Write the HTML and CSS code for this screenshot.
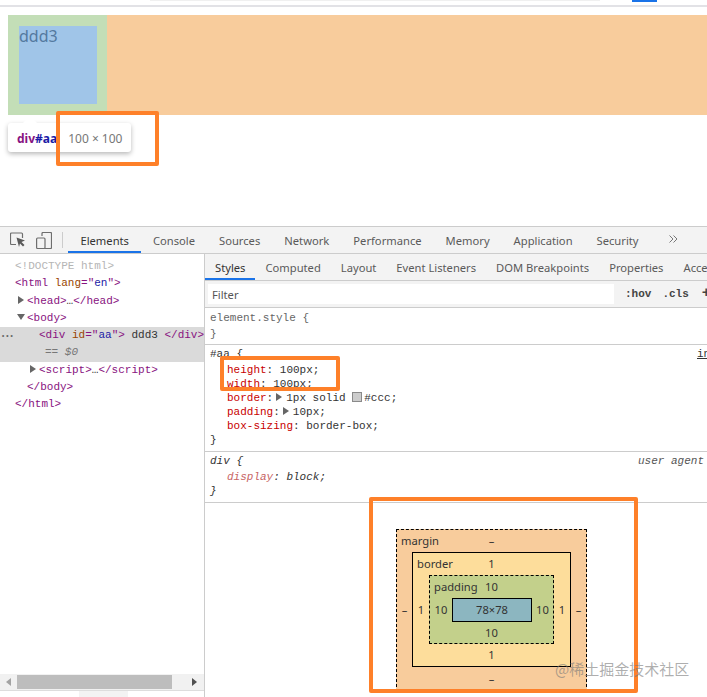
FILE: index.html
```html
<!DOCTYPE html>
<html lang="en">

<head>
<meta charset="UTF-8" />
<title>box model</title>
<link rel="stylesheet" href="styles.css">
</head>

<body>
<div class="topbar"><span class="top-field"></span><span class="top-blue"></span></div>

<div class="preview">
<div class="bar">
<div class="padbox"><div class="inner">ddd3</div></div>
</div>
<div class="tooltip"><b class="tip-tag">div</b><b class="tip-id">#aa</b><span class="tip-size">100 × 100</span></div>
</div>

<div class="devtools">
<div class="toolbar">
<svg class="tool-icon" width="16" height="16" viewBox="0 0 16 16">
<path d="M6 12.500H1.500a1 1 0 0 1-1-1V2a1 1 0 0 1 1-1h10a1 1 0 0 1 1 1v4" fill="none" stroke="#6e6e6e" stroke-width="1.200"/>
<path d="M6.500 5.500l8.500 3-3.500 1.500 3 3-1.500 1.500-3-3L9 15z" fill="#5a5a5a"/>
</svg>
<svg class="tool-icon" width="16" height="17" viewBox="0 0 16 17">
<path d="M6 4V1.500a1 1 0 0 1 1-1h7.500a1 1 0 0 1 1 1v14a1 1 0 0 1-1 1H9" fill="none" stroke="#6e6e6e" stroke-width="1.200"/>
<rect x="0.600" y="6" width="8.400" height="10.500" rx="1" fill="none" stroke="#6e6e6e" stroke-width="1.200"/>
</svg>
<span class="tool-sep"></span>
<div class="tabs">
<span class="tab active">Elements</span>
<span class="tab">Console</span>
<span class="tab">Sources</span>
<span class="tab">Network</span>
<span class="tab">Performance</span>
<span class="tab">Memory</span>
<span class="tab">Application</span>
<span class="tab">Security</span>
</div>
<svg class="more" width="9" height="8" viewBox="0 0 9 8">
<path d="M.5.500L4 4 .5 7.500M4.500.500L8 4 4.500 7.500" fill="none" stroke="#777" stroke-width="1"/>
</svg>
<span class="end-sep"></span>
</div>

<div class="panes">
<div class="dom">
<div class="dom-tree">
<div class="line lv0 doctype">&lt;!DOCTYPE html&gt;</div>
<div class="line lv0"><i>&lt;html</i> <u>lang</u><i>="</i><em>en</em><i>"&gt;</i></div>
<div class="line lv1"><span class="arrow right"></span><i>&lt;head&gt;</i>…<i>&lt;/head&gt;</i></div>
<div class="line lv1"><span class="arrow down"></span><i>&lt;body&gt;</i></div>
<div class="selected">
<span class="dots">•••</span>
<div class="line lv2"><i>&lt;div</i> <u>id</u><i>="</i><em>aa</em><i>"&gt;</i> ddd3 <i>&lt;/div&gt;</i></div>
<div class="line lv3">== $0</div>
</div>
<div class="line lv2"><span class="arrow right"></span><i>&lt;script&gt;</i>…<i>&lt;/script&gt;</i></div>
<div class="line lv1"><i>&lt;/body&gt;</i></div>
<div class="line lv0"><i>&lt;/html&gt;</i></div>
</div>
<div class="scrollbar">
<span class="sb-arrow left"></span>
<span class="sb-thumb"></span>
<span class="sb-arrow rightward"></span>
</div>
<span class="below-bar"></span>
</div>

<div class="side">
<div class="subtabs">
<span class="subtab active">Styles</span>
<span class="subtab">Computed</span>
<span class="subtab">Layout</span>
<span class="subtab">Event Listeners</span>
<span class="subtab">DOM Breakpoints</span>
<span class="subtab">Properties</span>
<span class="subtab">Acces</span>
</div>
<div class="filter">
<div class="filter-input">Filter</div>
<div class="filter-btns"><b>:hov</b><b>.cls</b><b class="plus">+</b></div>
</div>

<div class="rule rule-el">
<div class="sel head">element.style {</div>
<div class="sel">}</div>
</div>

<div class="rule rule-aa">
<a class="source">in</a>
<div class="sel dark head">#aa {</div>
<div class="decl"><span class="prop">height</span>: 100px;</div>
<div class="decl"><span class="prop">width</span>: 100px;</div>
<div class="decl"><span class="prop">border</span>:<span class="tri"></span>1px solid <span class="swatch"></span>#ccc;</div>
<div class="decl"><span class="prop">padding</span>:<span class="tri"></span>10px;</div>
<div class="decl"><span class="prop">box-sizing</span>: border-box;</div>
<div class="sel dark">}</div>
</div>

<div class="rule rule-div">
<span class="source agent">user agent</span>
<div class="sel dark ua head">div {</div>
<div class="decl ua"><span class="prop">display</span>: block;</div>
<div class="sel dark ua">}</div>
</div>

<div class="metrics">
<div class="mbox m-margin">
<div class="mtop"><span>margin</span><span>–</span></div>
<span class="mside">–</span>
<div class="mbox m-border">
<div class="mtop"><span>border</span><span>1</span></div>
<span class="mside">1</span>
<div class="mbox m-padding">
<div class="mtop"><span>padding</span><span>10</span></div>
<span class="mside">10</span>
<div class="m-content">78×78</div>
<span class="mside">10</span>
<div class="mbottom">10</div>
</div>
<span class="mside">1</span>
<div class="mbottom">1</div>
</div>
<span class="mside">–</span>
<div class="mbottom">–</div>
</div>
</div>
</div>
</div>
</div>

<div class="mark mark-size"></div>
<div class="mark mark-rule"></div>
<div class="mark mark-box"></div>
<div class="watermark">@稀土掘金技术社区</div>
</body>

</html>
```

FILE: styles.css
```css
* {
margin: 0;
padding: 0;
box-sizing: border-box;
}

html, body {
height: 697px;
overflow: hidden;
background: #fff;
}

body {
position: relative;
font-family: "Noto Sans", sans-serif;
font-size: 11.200px;
color: #5a5a5a;
}

.topbar {
height: 7px;
border-bottom: 2px solid #e2e2e6;
display: flex;
justify-content: space-between;
padding: 0 50px 0 150px;
}

.top-field {
width: 450px;
height: 1px;
background: #f0f0f0;
}

.top-blue {
width: 25px;
height: 2px;
background: #1a73e8;
}

/* page being inspected */
.preview {
height: 219px;
padding-top: 8px;
position: relative;
}

.bar {
height: 100px;
margin-left: 8px;
background: #f8cc9c;
}

.padbox {
width: 99px;
height: 100px;
padding: 11px;
background: #c3deb7;
}

.inner {
width: 78px;
height: 78px;
background: #a0c5e8;
color: #53799f;
font-size: 16px;
line-height: 21px;
}

.tooltip {
position: absolute;
left: 8px;
top: 116px;
width: 123px;
height: 29px;
padding: 1px 0 0 9px;
display: flex;
align-items: center;
background: #fff;
border-radius: 3px;
box-shadow: 0 2px 5px rgba(0, 0, 0, 0.28);
font-size: 12px;
}

.tooltip::before {
content: "";
position: absolute;
left: 17px;
top: -5px;
width: 10px;
height: 10px;
background: #fff;
transform: rotate(45deg);
}

.tip-tag, .tip-id, .tip-size {
position: relative;
}

.tip-tag {
color: #881280;
}

.tip-id {
color: #1a1aa6;
}

.tip-size {
margin-left: 11px;
color: #777;
}

/* devtools */
.devtools {
height: 471px;
border-top: 1px solid #ccc;
}

.toolbar {
height: 27px;
background: #f3f3f3;
border-bottom: 1px solid #ccc;
display: flex;
align-items: center;
padding-left: 10px;
}

.tool-icon {
flex: none;
}

.tool-icon + .tool-icon {
margin-left: 10px;
}

.tool-sep {
width: 1px;
height: 16px;
margin: 0 6px 0 10px;
background: #ccc;
}

.tabs {
display: flex;
height: 26px;
}

.tab {
padding: 0 12px;
line-height: 27px;
white-space: nowrap;
}

.tab.active {
color: #333;
border-bottom: 2px solid #1a73e8;
}

.more {
flex: none;
margin-left: 18px;
margin-bottom: 3px;
}

.end-sep {
width: 1px;
height: 16px;
margin-left: 29px;
background: #ccc;
}

.panes {
display: flex;
height: 443px;
}

.dom {
width: 205px;
flex: none;
border-right: 1px solid #ccc;
display: flex;
flex-direction: column;
font-family: "Liberation Mono", monospace;
font-size: 11px;
color: #333;
}

.dom-tree {
flex: 1;
padding-top: 4px;
}

.line {
height: 17.250px;
line-height: 17px;
white-space: nowrap;
position: relative;
}

.line i {
font-style: normal;
color: #881280;
}

.line u {
text-decoration: none;
color: #994500;
}

.line em {
font-style: normal;
color: #1a1aa6;
}

.lv0 {
padding-left: 15px;
}

.lv1 {
padding-left: 27px;
}

.lv2 {
padding-left: 39px;
}

.lv3 {
padding-left: 45px;
color: #777;
font-style: italic;
}

.doctype {
color: #b5b5b5;
}

.selected {
background: #dadada;
position: relative;
}

.dots {
position: absolute;
left: 1px;
top: 3px;
font-size: 7px;
line-height: 12px;
color: #666;
}

.arrow {
position: absolute;
width: 0;
height: 0;
}

.arrow.right {
margin-left: -9px;
top: 3px;
border-left: 6px solid #666;
border-top: 4px solid transparent;
border-bottom: 4px solid transparent;
}

.arrow.down {
margin-left: -10px;
top: 4px;
border-top: 6px solid #666;
border-left: 4px solid transparent;
border-right: 4px solid transparent;
}

.scrollbar {
height: 17px;
background: #f1f1f1;
border-bottom: 1px solid #ddd;
display: flex;
align-items: center;
padding: 0 4px 0 6px;
}

.sb-thumb {
width: 155px;
height: 14px;
margin: 0 20px 0 6px;
background: #bdbdbd;
}

.sb-arrow {
width: 0;
height: 0;
border-top: 4px solid transparent;
border-bottom: 4px solid transparent;
}

.sb-arrow.left {
border-right: 5px solid #a3a3a3;
}

.sb-arrow.rightward {
border-left: 5px solid #505050;
}

.below-bar {
flex: none;
width: 49px;
height: 6px;
margin-left: 79px;
background: #f3f3f3;
}

.side {
flex: 1;
min-width: 0;
overflow: hidden;
}

.subtabs {
height: 27px;
display: flex;
background: #f3f3f3;
border-bottom: 1px solid #ccc;
white-space: nowrap;
}

.subtab {
padding: 0 10px;
line-height: 27px;
}

.subtab.active {
color: #333;
height: 26px;
border-bottom: 2px solid #1a73e8;
}

.filter {
height: 27px;
display: flex;
background: #f3f3f3;
border-bottom: 1px solid #ccc;
padding: 3px 0 3px 3px;
}

.filter-input {
flex: none;
width: 406px;
background: #fff;
padding-left: 4px;
line-height: 21px;
color: #555;
}

.filter-btns {
display: flex;
gap: 11px;
padding-left: 11px;
font-family: "Liberation Mono", monospace;
font-size: 11px;
line-height: 20px;
color: #444;
white-space: nowrap;
}

.filter-btns .plus {
margin-left: 2px;
font-size: 15px;
}

.rule {
position: relative;
padding-left: 5px;
border-bottom: 1px solid #ccc;
font-family: "Liberation Mono", monospace;
font-size: 11px;
line-height: 14px;
color: #333;
}

.rule-el {
height: 37px;
padding-top: 3px;
}

.rule-aa {
height: 107px;
padding-top: 2px;
}

.rule-div {
height: 51px;
padding-top: 2px;
}

.sel {
color: #666;
height: 14px;
}

.sel.head {
margin-bottom: 2px;
}

.sel.dark {
color: #333;
}

.decl {
padding-left: 17px;
height: 14px;
}

.prop {
color: #c80000;
}

.ua {
font-style: italic;
}

.ua .prop {
color: #c86464;
}

.source {
position: absolute;
left: 492px;
top: 2px;
text-decoration: underline;
white-space: nowrap;
}

.source.agent {
left: 433px;
text-decoration: none;
font-style: italic;
color: #555;
}

.tri {
display: inline-block;
margin: 0 4px 0 3px;
border-left: 6px solid #666;
border-top: 4px solid transparent;
border-bottom: 4px solid transparent;
}

.swatch {
display: inline-block;
width: 10px;
height: 10px;
margin-right: 2px;
vertical-align: -1px;
background: #ccc;
border: 1px solid #8a8a8a;
}

/* box model diagram */
.metrics {
padding: 26px 0 0 191px;
color: #333;
font-size: 11.200px;
}

.mbox {
display: grid;
text-align: center;
line-height: 16px;
}

.m-margin {
width: 191px;
height: 163px;
grid-template-columns: 15px 159px 15px;
grid-template-rows: 22px 115px 24px;
background: #f8cc9c;
border: 1px dashed #000;
}

.m-border {
grid-template-columns: 16px 125px 16px;
grid-template-rows: 22px 69px 22px;
background: #fddd9b;
border: 1px solid #000;
}

.m-padding {
grid-template-columns: 22px 80px 21px;
grid-template-rows: 22px 24px 21px;
background: #c3d08b;
border: 1px dashed #000;
}

.m-content {
background: #8cb6c0;
border: 1px solid #000;
line-height: 22px;
}

.mtop {
grid-column: 1 / -1;
display: grid;
grid-template-columns: 1fr auto 1fr;
padding-top: 3px;
}

.mtop span:first-child {
text-align: left;
padding-left: 4px;
}

.mside {
align-self: center;
}

.mbottom {
grid-column: 1 / -1;
align-self: center;
}

/* annotations drawn on top of the screenshot */
.mark {
position: absolute;
border: 4px solid #fe8029;
border-radius: 2px;
}

.mark-size {
left: 56px;
top: 111px;
width: 103px;
height: 55px;
}

.mark-rule {
left: 220px;
top: 356px;
width: 120px;
height: 35px;
}

.mark-box {
left: 369px;
top: 497px;
width: 269px;
height: 196px;
}

.watermark {
position: absolute;
left: 555px;
top: 658px;
font-family: "Noto Sans CJK SC", sans-serif;
font-size: 15px;
line-height: 22px;
color: rgba(120, 120, 120, 0.6);
white-space: nowrap;
}
```
